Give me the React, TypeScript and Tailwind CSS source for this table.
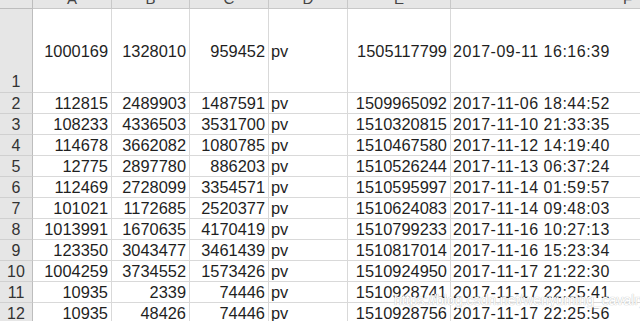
import React from "react";

const rows: string[][] = [
  ["1000169", "1328010", "959452", "pv", "1505117799", "2017-09-11 16:16:39"],
  ["112815", "2489903", "1487591", "pv", "1509965092", "2017-11-06 18:44:52"],
  ["108233", "4336503", "3531700", "pv", "1510320815", "2017-11-10 21:33:35"],
  ["114678", "3662082", "1080785", "pv", "1510467580", "2017-11-12 14:19:40"],
  ["12775", "2897780", "886203", "pv", "1510526244", "2017-11-13 06:37:24"],
  ["112469", "2728099", "3354571", "pv", "1510595997", "2017-11-14 01:59:57"],
  ["101021", "1172685", "2520377", "pv", "1510624083", "2017-11-14 09:48:03"],
  ["1013991", "1670635", "4170419", "pv", "1510799233", "2017-11-16 10:27:13"],
  ["123350", "3043477", "3461439", "pv", "1510817014", "2017-11-16 15:23:34"],
  ["1004259", "3734552", "1573426", "pv", "1510924950", "2017-11-17 21:22:30"],
  ["10935", "2339", "74446", "pv", "1510928741", "2017-11-17 22:25:41"],
  ["10935", "48426", "74446", "pv", "1510928756", "2017-11-17 22:25:56"],
];

const letters = ["A", "B", "C", "D", "E", "F"];

export default function App() {
  return (
    <div
      className="relative w-[640px] h-[321px] overflow-hidden bg-white text-[#1f1f1f]"
      style={{ fontFamily: '"Liberation Sans", Arial, sans-serif' }}
    >
      <div className="grid grid-cols-[33px_79px_78px_79px_79px_103px_354px] w-[805px]">
        {/* header row */}
        <div className="h-[9px] bg-[#e6e6e6] border-r border-b border-[#bdbdbd]" />
        {letters.map((l) => (
          <div
            key={l}
            className="h-[9px] bg-[#e6e6e6] border-r border-b border-[#c8c8c8] flex items-end justify-center overflow-hidden text-[15px] leading-[15px] text-[#444]"
          >
            <span className="mb-[2px]">{l}</span>
          </div>
        ))}

        {rows.map((r, i) => {
          const first = i === 0;
          const h = first ? "h-[84px]" : "h-[21px]";
          return (
            <React.Fragment key={i}>
              <div
                className={`${h} bg-[#e6e6e6] border-r border-b border-[#bdbdbd] border-b-[#d0d0d0] flex justify-center text-[16px] leading-[19px] text-[#333] ${
                  first ? "items-end pb-[1px]" : "items-center"
                }`}
              >
                {i + 1}
              </div>
              {r.map((c, j) => {
                let align = "justify-end pr-[3px] text-[16.4px]";
                if (j === 3) align = "justify-start pl-[2px] text-[16.4px]";
                if (j === 5) align = "justify-start pl-[2px] text-[16px] tracking-[0.5px] border-r-0";
                return (
                  <div
                    key={j}
                    className={`${h} border-r border-b border-[#d9d9d9] flex items-center leading-[19px] whitespace-nowrap ${
                      first ? "pt-[2px]" : ""
                    } ${align}`}
                  >
                    {c}
                  </div>
                );
              })}
            </React.Fragment>
          );
        })}
      </div>

      <div
        className="absolute left-[394px] top-[292px] text-[14px] leading-[16px] text-white whitespace-nowrap"
        style={{ textShadow: "0 0 1px #c4c4c4, 0 0 1px #c4c4c4" }}
      >
        https://blog.csdn.net/wenyuming_cavalry
      </div>
    </div>
  );
}
